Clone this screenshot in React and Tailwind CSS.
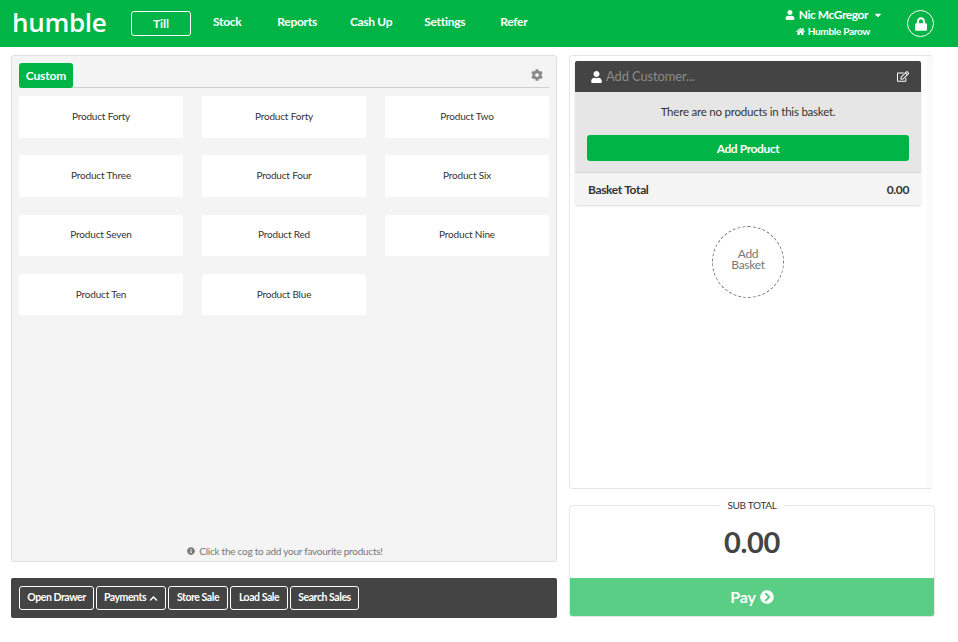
import React from "react";
import { FaUser, FaCaretDown, FaHome, FaLock, FaCog, FaInfoCircle, FaChevronUp, FaChevronCircleRight, FaRegEdit } from "react-icons/fa";

const products = ["Product Forty","Product Forty","Product Two","Product Three","Product Four","Product Six","Product Seven","Product Red","Product Nine","Product Ten","Product Blue"];

function ActionButton({ className, children }) {
  return (
    <button className={"h-[24px] flex items-center justify-center gap-[3px] border border-white rounded-[3px] text-white text-[10.5px] font-bold tracking-[-0.45px] whitespace-nowrap " + className}>
      {children}
    </button>
  );
}

export default function App() {
  return (
    <div className="w-[958px] h-[642px] bg-white overflow-hidden font-['Lato','Liberation_Sans',sans-serif] text-[#333]">
      <header className="h-[47px] bg-[#00b445] flex items-center text-white">
        <div className="w-[131px] pl-[12px] text-[26px] font-semibold tracking-[-0.3px] leading-none font-['Open_Sans',sans-serif] -mt-[4px]">humble</div>
        <nav className="flex items-center">
          <a className="w-[60px] h-[25px] flex items-center justify-center border border-white rounded-[3px] text-[12px] font-bold">Till</a>
          <div className="flex ml-[22px] mb-[4px] text-[12px] font-bold tracking-[-0.3px] whitespace-nowrap">
            <a>Stock</a>
            <a className="ml-[36px]">Reports</a>
            <a className="ml-[33px]">Cash Up</a>
            <a className="ml-[32px]">Settings</a>
            <a className="ml-[35px]">Refer</a>
          </div>
        </nav>
        <div className="ml-auto flex flex-col items-center mr-[24px] mb-[2px]">
          <div className="flex items-center text-[12px] font-bold h-[16px] tracking-[-0.45px] whitespace-nowrap">
            <FaUser className="w-[10px] h-[10px] mr-[4px]" />
            <span>Nic McGregor</span>
            <FaCaretDown className="w-[10px] h-[10px] ml-[5px]" />
          </div>
          <div className="flex items-center text-[10px] font-bold h-[14px] mt-[1px] mr-[2px] tracking-[-0.3px] whitespace-nowrap">
            <FaHome className="w-[9px] h-[9px] mr-[3px]" />
            <span>Humble Parow</span>
          </div>
        </div>
        <div className="w-[27px] h-[27px] mr-[24px] rounded-full border border-white flex items-center justify-center">
          <FaLock className="w-[12px] h-[14px]" />
        </div>
      </header>

      <main className="flex pl-[11px] pt-[8px] gap-[12px]">
        <div className="w-[546px]">
          <section className="h-[507px] bg-[#f4f4f4] border border-[#e0e0e0] rounded-[3px] px-[7px] pt-[7px] flex flex-col">
            <div className="h-[25px] flex items-start justify-between border-b border-[#cfcfcf] shrink-0">
              <div className="h-[25px] w-[54px] bg-[#00b445] rounded-[3px] text-white text-[12px] font-bold tracking-[-0.1px] flex items-center justify-center">Custom</div>
              <FaCog className="w-[12px] h-[12px] text-[#8a8a8a] mt-[6px] mr-[6px]" />
            </div>
            <div className="grid grid-cols-3 gap-x-[19px] gap-y-[17.8px] mt-[8px]">
              {products.map((p, i) => (
                <div key={i} className="h-[41.5px] bg-white rounded-[2px] flex items-center justify-center text-[10px] tracking-[-0.17px] text-[#333] pb-[1px]">{p}</div>
              ))}
            </div>
            <div className="mt-auto h-[19px] mb-[1px] pt-[1px] flex items-center justify-center gap-[4px] text-[10px] tracking-[-0.25px] text-[#777] pl-[2px]">
              <FaInfoCircle className="w-[8px] h-[8px] text-[#777]" />
              <span>Click the cog to add your favourite products!</span>
            </div>
          </section>
          <div className="mt-[16px] h-[40px] bg-[#444444] rounded-[2px] flex items-center gap-[2px] px-[8px]">
            <ActionButton className="w-[75px]">Open Drawer</ActionButton>
            <ActionButton className="w-[70px]">Payments <FaChevronUp className="w-[9px] h-[9px]" /></ActionButton>
            <ActionButton className="w-[60px]">Store Sale</ActionButton>
            <ActionButton className="w-[58px]">Load Sale</ActionButton>
            <ActionButton className="w-[69px]">Search Sales</ActionButton>
          </div>
        </div>

        <div className="w-[366px]">
          <section className="relative w-[364px] h-[434px] border border-[#e6e6e6] rounded-[3px] pl-[5px] pt-[5px] flex">
            <div className="w-[346px] h-[144px] rounded-[2px] shadow-[0_1px_2px_rgba(0,0,0,0.15)] flex flex-col shrink-0">
              <div className="h-[31px] bg-[#444444] rounded-t-[2px] flex items-center px-[16px] shrink-0">
                <FaUser className="w-[11px] h-[12px] text-white mr-[4px]" />
                <span className="text-[13px] tracking-[-0.15px] text-[#8b8b8b]">Add Customer...</span>
                <FaRegEdit className="w-[12px] h-[11px] text-white ml-auto -mr-[4px]" />
              </div>
              <div className="h-[81px] bg-[#e6e6e6] border-b border-[#dadada] flex flex-col items-center px-[12px] shrink-0">
                <p className="text-[11.5px] tracking-[-0.22px] text-[#333] mt-[12px] leading-[15px]">There are no products in this basket.</p>
                <button className="mt-[16px] w-full h-[26px] pt-[1px] bg-[#00b445] rounded-[3px] text-white text-[12px] tracking-[-0.4px] font-bold">Add Product</button>
              </div>
              <div className="h-[32px] pt-[1px] bg-[#f4f4f4] rounded-b-[2px] flex items-center justify-between pl-[13px] pr-[12px] text-[12px] tracking-[-0.35px] font-bold text-[#333]">
                <span>Basket Total</span>
                <span>0.00</span>
              </div>
            </div>
            <div className="w-[6px] bg-[#fafafa] shrink-0 ml-[6px] -mt-[4px]" />
            <button className="absolute left-[142px] top-[170px] w-[72px] h-[72px] rounded-full border border-dashed border-[#777] flex items-center justify-center text-center text-[12px] tracking-[-0.3px] leading-[11px] text-[#777] pb-[6px]">
              Add<br />Basket
            </button>
          </section>
          <section className="relative mt-[16px] h-[112px] border border-[#e6e6e6] rounded-[3px] flex flex-col">
            <div className="absolute left-1/2 -translate-x-1/2 -top-[7px] bg-white px-[8px] text-[10px] tracking-[-0.3px] leading-[12px] text-[#333]">SUB TOTAL</div>
            <div className="h-[72px] flex items-center justify-center text-[29px] tracking-[-0.3px] font-bold text-[#444]">0.00</div>
            <button className="flex-1 bg-[#5ace84] text-white text-[16px] tracking-[-0.2px] font-bold flex items-center justify-center gap-[4px] rounded-b-[2px] pb-[1px]">
              Pay <FaChevronCircleRight className="w-[14px] h-[14px]" />
            </button>
          </section>
        </div>
      </main>
    </div>
  );
}
